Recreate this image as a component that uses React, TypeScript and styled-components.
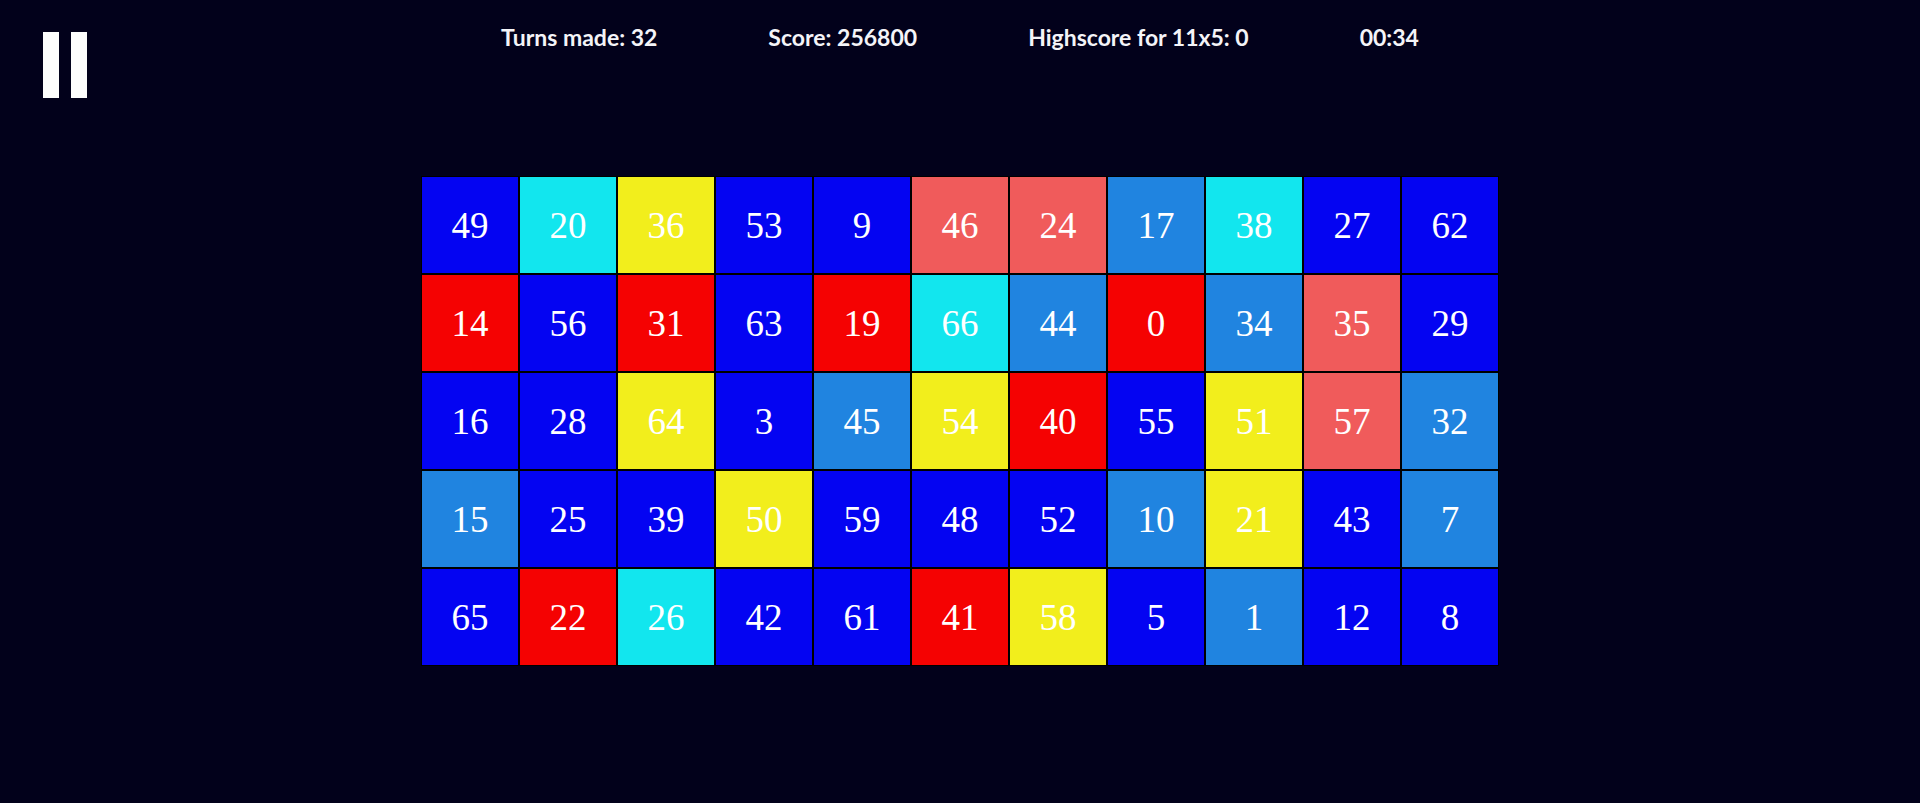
import styled, { createGlobalStyle } from 'styled-components'

const GlobalStyle = createGlobalStyle`
	html, body {
		margin: 0;
		padding: 0;
		background: #02011b;
	}
`

type Tone = 'B' | 'C' | 'Y' | 'S' | 'R' | 'L'

const tones: Record<Tone, string> = {
	B: '#0404f2',
	C: '#12e6ee',
	Y: '#f2ee1c',
	S: '#f05b5b',
	R: '#f50202',
	L: '#2084e0',
}

const board: [number, Tone][][] = [
	[[49, 'B'], [20, 'C'], [36, 'Y'], [53, 'B'], [9, 'B'], [46, 'S'], [24, 'S'], [17, 'L'], [38, 'C'], [27, 'B'], [62, 'B']],
	[[14, 'R'], [56, 'B'], [31, 'R'], [63, 'B'], [19, 'R'], [66, 'C'], [44, 'L'], [0, 'R'], [34, 'L'], [35, 'S'], [29, 'B']],
	[[16, 'B'], [28, 'B'], [64, 'Y'], [3, 'B'], [45, 'L'], [54, 'Y'], [40, 'R'], [55, 'B'], [51, 'Y'], [57, 'S'], [32, 'L']],
	[[15, 'L'], [25, 'B'], [39, 'B'], [50, 'Y'], [59, 'B'], [48, 'B'], [52, 'B'], [10, 'L'], [21, 'Y'], [43, 'B'], [7, 'L']],
	[[65, 'B'], [22, 'R'], [26, 'C'], [42, 'B'], [61, 'B'], [41, 'R'], [58, 'Y'], [5, 'B'], [1, 'L'], [12, 'B'], [8, 'B']],
]

export default function App() {
	return (
		<Page>
			<GlobalStyle />
			<Header>
				<PauseButton aria-label='pause'>
					<Bar />
					<Bar />
				</PauseButton>
				<Stats>
					<Stat>Turns made: 32</Stat>
					<Stat>Score: 256800</Stat>
					<Stat>Highscore for 11x5: 0</Stat>
					<Stat>00:34</Stat>
				</Stats>
				<div />
			</Header>
			<Board>
				{board.flat().map(([n, t], i) => (
					<Cell key={i} $tone={t}>{n}</Cell>
				))}
			</Board>
		</Page>
	)
}

const Page = styled.div`
	width: 100%;
	min-height: 803px;
	background: #02011b;
	display: flex;
	flex-direction: column;
`

const Header = styled.div`
	display: grid;
	grid-template-columns: 1fr auto 1fr;
	align-items: start;
`

const PauseButton = styled.button`
	display: flex;
	gap: 12px;
	margin: 32px 0 0 43px;
	padding: 0;
	border: none;
	background: transparent;
	cursor: pointer;
	justify-self: start;
`

const Bar = styled.span`
	display: block;
	width: 16px;
	height: 66px;
	background: #fdfdfd;
`

const Stats = styled.div`
	display: flex;
	gap: 111px;
	padding-top: 24px;
`

const Stat = styled.span`
	font-family: 'Lato', 'Liberation Sans', sans-serif;
	font-weight: 700;
	font-size: 23px;
	line-height: 26px;
	color: #f4f4f8;
	white-space: nowrap;
`

const Board = styled.div`
	align-self: center;
	margin-top: 78px;
	display: grid;
	grid-template-columns: repeat(11, 96px);
	grid-auto-rows: 96px;
	gap: 2px;
	padding: 1px;
	background: #000;
`

const Cell = styled.div<{ $tone: Tone }>`
	display: flex;
	align-items: center;
	justify-content: center;
	background: ${p => tones[p.$tone]};
	color: #fff;
	font-family: 'Liberation Serif', serif;
	font-size: 37px;
	font-variant-numeric: slashed-zero;
`
